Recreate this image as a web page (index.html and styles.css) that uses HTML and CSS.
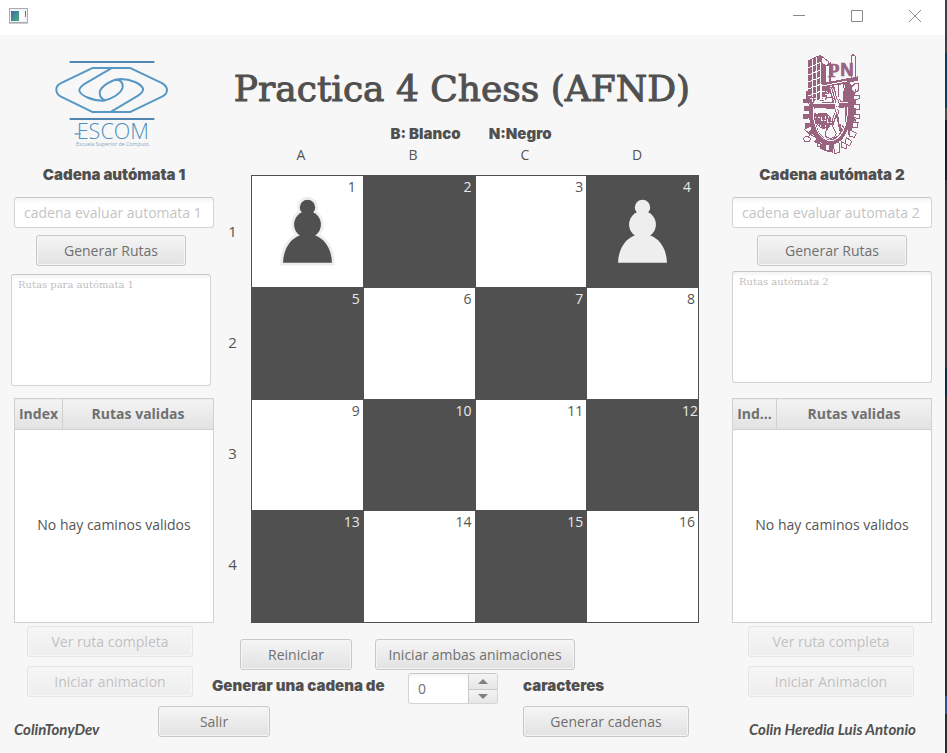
FILE: index.html
```html
<!DOCTYPE html>
<html lang="es">
<head>
<meta charset="utf-8">
<title>Practica 4 Chess (AFND)</title>
<link rel="stylesheet" href="styles.css">
</head>
<body>
<svg class="defs" width="0" height="0" aria-hidden="true">
  <symbol id="pawn" viewBox="178 95 164 206">
    <g class="pawn-edge">
      <circle cx="260" cy="126" r="23"/><circle cx="260" cy="177" r="40"/>
      <path d="M187 291C188 250 211 206 260 206S332 250 333 291Z"/>
    </g>
    <g class="pawn-body">
      <circle cx="260" cy="126" r="23"/><circle cx="260" cy="177" r="40"/>
      <path d="M187 291C188 250 211 206 260 206S332 250 333 291Z"/>
    </g>
  </symbol>
</svg>

<header class="titlebar">
  <svg class="app-icon" viewBox="0 0 19 16" width="19" height="16" aria-hidden="true">
    <defs><linearGradient id="ig" x1="0" y1="0" x2="1" y2="1"><stop offset="0" stop-color="#3b6aa8"/><stop offset="1" stop-color="#4fae7e"/></linearGradient></defs>
    <rect x=".5" y=".5" width="18" height="14" fill="#f4f4f6" stroke="#a9adb3"/>
    <path d="M0 15.500h19" stroke="#c9cbd0"/>
    <rect x="2" y="3" width="8" height="10" fill="url(#ig)"/>
    <rect x="11" y="3" width="4" height="10" fill="#fff"/>
    <rect x="16" y="3" width="1" height="6" fill="url(#ig)"/>
  </svg>
  <div class="win-buttons">
    <button type="button" aria-label="Minimizar"><svg viewBox="0 0 12 12" width="12" height="12"><path d="M0 5.500h12"/></svg></button>
    <button type="button" aria-label="Maximizar"><svg viewBox="0 0 12 12" width="12" height="12"><path d="M.5.5h11v11H.5z"/></svg></button>
    <button type="button" aria-label="Cerrar"><svg viewBox="0 0 12 12" width="12" height="12"><path d="M0 0l12 12M12 0L0 12"/></svg></button>
  </div>
</header>

<main>
  <div class="upper">
    <section class="side side-left">
      <svg class="logo" viewBox="160 159 346 306" width="115" height="102" role="img" aria-label="ESCOM">
        <g fill="none" stroke="#5797c3" stroke-width="6" stroke-linejoin="round">
          <path d="M207 186H462M207 357H462" stroke="#4f87b0"/>
          <path d="M275 204H390L485 249Q500 258 500 270Q500 282 485 290L390 336H275L181 290Q167 282 167 268Q167 256 181 249Z"/>
          <path d="M332 205L256 249Q236 261 236 271C240 287 274 302 308 302C330 299 360 282 366 264C369 248 360 238 345 239"/>
          <path d="M332 335L408 290Q429 278 428 266C422 251 392 237 360 237C332 239 304 257 298 274C295 289 302 296 314 302"/>
        </g>
        <text class="logo-name" x="337" y="418" text-anchor="middle">ESCOM</text>
        <path d="M222 402H240" stroke="#5797c3" stroke-width="4"/>
        <text class="logo-sub" x="336" y="439" text-anchor="middle">Escuela Superior de Computo</text>
      </svg>
      <label class="heading" for="c1">Cadena autómata 1</label>
      <input class="field" id="c1" type="text" placeholder="cadena evaluar automata 1">
      <button class="btn mid" type="button">Generar Rutas</button>
      <textarea class="routes" aria-label="Rutas para autómata 1" placeholder="Rutas para autómata 1"></textarea>
      <table class="paths">
        <thead><tr><th class="idx">Index</th><th>Rutas validas</th></tr></thead>
        <tbody><tr><td colspan="2">No hay caminos validos</td></tr></tbody>
      </table>
    </section>

    <section class="center">
      <h1>Practica 4 Chess (AFND)</h1>
      <p class="legend"><span>B: Blanco</span><span>N:Negro</span></p>
      <div class="files"><span>A</span><span>B</span><span>C</span><span>D</span></div>
      <div class="ranks"><span>1</span><span>2</span><span>3</span><span>4</span></div>
      <div class="board">
        <div class="cell inset">1<svg class="pawn black" width="55" height="69"><use href="#pawn"/></svg></div>
        <div class="cell dark">2</div><div class="cell">3</div>
        <div class="cell dark inset">4<svg class="pawn white" width="55" height="69"><use href="#pawn"/></svg></div>
        <div class="cell dark">5</div><div class="cell">6</div><div class="cell dark">7</div><div class="cell">8</div>
        <div class="cell">9</div><div class="cell dark">10</div><div class="cell">11</div><div class="cell dark flush">12</div>
        <div class="cell dark">13</div><div class="cell">14</div><div class="cell dark">15</div><div class="cell">16</div>
      </div>
    </section>

    <section class="side side-right">
      <svg class="logo" viewBox="305 159 180 306" width="60" height="102" role="img" aria-label="IPN" shape-rendering="crispEdges">
        <g fill="#99627f">
          <path d="M324 181L360 164V296L324 312Z"/>
          <path d="M318 272H330V300H318ZM309 297H334V310H309ZM311 318L335 316V334H311ZM309 343L336 341V353L309 358ZM313 370L338 366V377L315 388ZM321 397L342 384L350 392L328 408ZM341 425L355 407L366 414L357 436ZM358 445L367 422L381 427L376 454ZM380 450L384 426L398 426L398 458L381 456Z"/>
          <path d="M328 305C322 368 330 432 388 434C440 432 458 370 444 306L438 308C440 360 428 412 388 419C350 416 340 358 342 308Z"/>
          <path d="M364 250L472 229V243L440 248L366 264Z"/>
          <path d="M430 248L446 244Q468 274 468 310Q468 366 446 410L442 400V312L430 306Z"/>
          <path d="M386 262L402 258L430 392L420 402Z"/>
          <path d="M426 250L440 250L392 400L384 390Z"/>
          <path d="M330 309L444 304V322L402 326H342Z"/>
          <path d="M346 345Q360 333 378 340Q396 350 397 366Q390 386 372 388Q352 382 346 364Z"/>
          <path d="M364 264L388 258V280L364 300Z"/>
          <path d="M360 166L384 182L374 198V252H362ZM384 190L392 186V248H384Z"/>
        </g>
        <g fill="#f7f7f7" stroke="#99627f" stroke-width="3">
          <path d="M362 168L384 184V194L374 196L364 188ZM374 196H386V247H374Z"/>
          <path d="M452 170L458 164L466 170V232L452 236Z"/>
          <path d="M451 264L465 250H474V272L460 278ZM458 288L478 286L478 296L460 300ZM460 314H476V328L458 326ZM460 342H478V356L458 352ZM455 366L474 366L470 384L456 382ZM450 390L468 400L462 412L446 408ZM438 412L454 424L448 438L434 430ZM422 424L440 434L438 446L424 442ZM400 430L416 428L418 458L402 460Z"/>
          <path d="M310 416Q316 404 330 414L328 424H312ZM376 434H386V450H376ZM350 428L361 431L358 440H350Z"/>
          <path d="M414 254L428 250V306L414 298ZM414 324L436 320L434 382L416 372Z"/>
          <path d="M374 398L392 370L408 400L402 412Q386 419 374 408Z"/>
        </g>
        <g fill="none" stroke="#f7f7f7" stroke-width="3">
          <path d="M337 176V307M349 170V301M324 203L362 187M324 225L362 209M324 246L362 231M324 267L362 252M324 288L362 273M364 258L440 243M338 312L444 308M344 326H374V337H408M338 318C337 365 350 420 390 422C424 421 442 374 442 320"/>
          <path d="M391 264L426 386M397 262L427 370M434 256L398 362M428 254L392 364"/>
          <path d="M352 352H362V362H376V346M350 374H360V384M374 374V386M384 348L380 368H394" stroke-dasharray="7 3"/>
          <path d="M330 295H346V303H362V292H378V300H394M366 274H380V284H370" stroke-dasharray="8 3"/>
        </g>
        <g fill="none" stroke="#99627f" stroke-width="3">
          <path d="M334 292H350L358 302H372L380 292H396L408 304M368 268L382 274L370 284L386 292M394 256L408 280M456 238Q474 232 472 244M346 338V368L362 384M448 252V412M340 410L312 388M464 266V280M462 300V312M464 328V342M464 356V366" stroke-dasharray="13 2"/>
        </g>
        <text class="ipn ipn-p" x="383" y="232">P</text>
        <text class="ipn ipn-n" x="420" y="227">N</text>
      </svg>
      <label class="heading" for="c2">Cadena autómata 2</label>
      <input class="field" id="c2" type="text" placeholder="cadena evaluar automata 2">
      <button class="btn mid" type="button">Generar Rutas</button>
      <textarea class="routes" aria-label="Rutas autómata 2" placeholder="Rutas autómata 2"></textarea>
      <table class="paths">
        <thead><tr><th class="idx-narrow">Ind...</th><th>Rutas validas</th></tr></thead>
        <tbody><tr><td colspan="2">No hay caminos validos</td></tr></tbody>
      </table>
    </section>
  </div>

  <div class="lower">
    <div class="stack">
      <button class="btn wide" type="button" disabled>Ver ruta completa</button>
      <button class="btn wide" type="button" disabled>Iniciar animacion</button>
    </div>
    <div class="controls">
      <div class="actions">
        <button class="btn small" type="button">Reiniciar</button>
        <button class="btn large" type="button">Iniciar ambas animaciones</button>
      </div>
      <div class="generate">
        <label class="heading" for="n">Generar una cadena de</label>
        <div class="spinner">
          <input id="n" type="text" value="0">
          <div class="arrows">
            <button type="button" aria-label="Aumentar"><svg viewBox="0 0 10 5" width="10" height="5"><path d="M0 5L5 0L10 5Z"/></svg></button>
            <button type="button" aria-label="Disminuir"><svg viewBox="0 0 10 5" width="10" height="5"><path d="M0 0L5 5L10 0Z"/></svg></button>
          </div>
        </div>
        <span class="heading">caracteres</span>
      </div>
    </div>
    <div class="stack stack-right">
      <button class="btn wide" type="button" disabled>Ver ruta completa</button>
      <button class="btn wide" type="button" disabled>Iniciar Animacion</button>
    </div>
  </div>

  <footer>
    <span class="credit">ColinTonyDev</span>
    <button class="btn small" type="button">Salir</button>
    <button class="btn wide" type="button">Generar cadenas</button>
    <span class="credit">Colin Heredia Luis Antonio</span>
  </footer>
</main>
</body>
</html>
```
FILE: styles.css
```css
* { box-sizing: border-box; }

body {
  margin: 0;
  min-height: 100vh;
  padding-right: 2px;
  background: #f7f7f7 linear-gradient(#3b4045 0 53px, #0b3a5c 53px 108px, #4a4a48 108px 120px, #151a2c 120px 180px, #2f3234 180px 368px, #0c2a48 368px 396px, #2b2b2b 396px 696px, #34508c 696px 714px, #2b2b2b 714px) right / 2px 100% no-repeat;
  color: #555;
  font: 14px/20px "Open Sans", "Noto Sans", sans-serif;
}

.defs { position: absolute; }

button, input, textarea { margin: 0; font: inherit; color: inherit; }

.titlebar {
  display: flex;
  justify-content: space-between;
  align-items: flex-start;
  height: 35px;
  padding: 8px 0 0 9px;
  background: #fff;
}
.win-buttons { display: flex; gap: 46px; padding: 2px 24px 0 0; }
.win-buttons button { display: block; width: 12px; height: 12px; padding: 0; border: 0; background: none; }
.win-buttons svg { display: block; fill: none; stroke: #8a8a8a; }

main { padding: 0 13px 16px 14px; }

.upper { display: grid; grid-template-columns: 200px 1fr 200px; }

.side { display: flex; flex-direction: column; align-items: center; padding-top: 18px; }
.logo { display: block; }
.side-left .logo { margin-right: 6px; }
.logo-name { font: 300 65px/1 "Open Sans", sans-serif; fill: #4f8fbc; }
.logo-sub { font: 16px "Open Sans", sans-serif; fill: #7fa9c8; }
.ipn { fill: #99627f; stroke: #99627f; stroke-width: 2px; }
.ipn-p { font: bold 56px "Liberation Serif", serif; }
.ipn-n { font: bold 56px "Liberation Sans", sans-serif; }

.heading { color: #505050; font: 900 15px/20px Inter, "Liberation Sans", sans-serif; }
.side .heading { margin: 10px 0 12px; }

.field, .routes, .spinner {
  border: 1px solid #d4d4d4;
  border-top-color: #c8c8c8;
  border-radius: 3px;
  background: #fff linear-gradient(#f4f4f4, #fff 5px);
}
.field { width: 100%; height: 31px; padding: 0 9px; }
.field::placeholder { color: #c4c4c4; opacity: 1; }
.routes::placeholder { color: #c0c0c0; opacity: 1; }

.btn {
  height: 31px;
  padding: 0;
  border: 1px solid #c8c8c8;
  border-radius: 3px;
  background: linear-gradient(#f5f5f5, #e2e2e2);
  box-shadow: inset 0 0 0 1px #f5f5f5;
  color: #707070;
  white-space: nowrap;
}
.btn:disabled { opacity: .4; }
.mid { width: 150px; margin-top: 7px; }
.side-left .mid { margin-right: 6px; }
.small { width: 112px; }
.wide { width: 166px; }
.large { width: 200px; }

.routes {
  display: block;
  width: 100%;
  height: 112px;
  padding: 3px 6px;
  resize: none;
  font: 10px/14px "DejaVu Serif", serif;
}
.side-left .routes { margin: 8px 6px 12px 0; }
.side-right .routes { margin: 5px 0 15px; }

.paths {
  width: 100%;
  height: 225px;
  table-layout: fixed;
  border-collapse: collapse;
  background: #fff;
}
.paths th, .paths td { padding: 0 0 2px; border: 1px solid #d0d0d0; text-align: center; }
.paths th { height: 31px; padding: 0; background: linear-gradient(#f4f4f4, #e2e2e2); color: #707070; font-weight: 700; }
.paths .idx { width: 48px; }
.paths .idx-narrow { width: 44px; }

.center {
  display: grid;
  grid-template-columns: 37px 1fr 33px;
  align-content: start;
  padding-top: 24px;
}
h1 {
  grid-column: 1 / -1;
  margin: 0 22px 0 0;
  color: #505050;
  text-align: center;
  white-space: nowrap;
  font: 36px/60px "DejaVu Serif", serif;
  -webkit-text-stroke: 1px #505050;
}
.legend {
  grid-column: 1 / -1;
  display: flex;
  justify-content: center;
  gap: 28px;
  margin: 5px 4px 1px 0;
  color: #505050;
  font: 900 15px/20px Inter, sans-serif;
}
.files {
  grid-column: 2;
  display: grid;
  grid-template-columns: repeat(4, 1fr);
  margin: 0 6px 10px -6px;
  text-align: center;
}
.ranks { grid-column: 1; display: grid; grid-template-rows: repeat(4, 1fr); align-items: center; padding-bottom: 3px; text-align: center; font-size: 15px; }
.board {
  grid-column: 2;
  display: grid;
  grid-template-columns: repeat(4, 1fr);
  border: 1px solid #505050;
  border-width: 1px 0 0 1px;
}
.cell {
  display: grid;
  position: relative;
  aspect-ratio: 1;
  padding: 1px 3px 0 0;
  border: 1px solid #505050;
  border-width: 0 1px 1px 0;
  background: #fff;
  text-align: right;
  align-items: start;
}
.inset { padding-right: 7px; }
.flush { padding-right: 0; }
.dark { background: #505050; color: #e8e8e8; }
.pawn { position: absolute; inset: 0; margin: auto; }
.black { fill: #505050; stroke: #eee; }
.white { fill: #eee; stroke: #505050; }
.pawn-edge { stroke-width: 17px; }
.pawn-body { stroke: none; }

.lower { display: grid; grid-template-columns: 198px 1fr 200px; }
.stack { display: grid; gap: 9px; align-content: start; justify-content: start; padding: 3px 0 0 13px; }
.stack-right { padding-left: 16px; }
.controls { padding-top: 16px; }
.actions { display: flex; gap: 23px; padding-left: 28px; }
.generate { display: grid; grid-template-columns: 196px 115px 1fr; margin-top: 3px; }
.generate .heading { padding-top: 3px; }
.spinner { display: flex; width: 90px; height: 31px; }
.spinner input { width: 59px; padding: 0 9px; border: 0; background: none; color: #707070; }
.arrows { display: grid; flex: 1; grid-template-rows: 1fr 1fr; border-left: 1px solid #c8c8c8; }
.arrows button { display: grid; place-items: center; padding: 0; border: 0; background: linear-gradient(#f4f4f4, #e6e6e6); }
.arrows button + button { border-top: 1px solid #c8c8c8; }
.arrows svg { fill: #808080; }

footer { display: grid; grid-template-columns: 144px 365px 226px 1fr; margin-top: 2px; }
.credit { padding-top: 13px; color: #505050; white-space: nowrap; font: italic 700 15px/20px Lato, sans-serif; }
```
